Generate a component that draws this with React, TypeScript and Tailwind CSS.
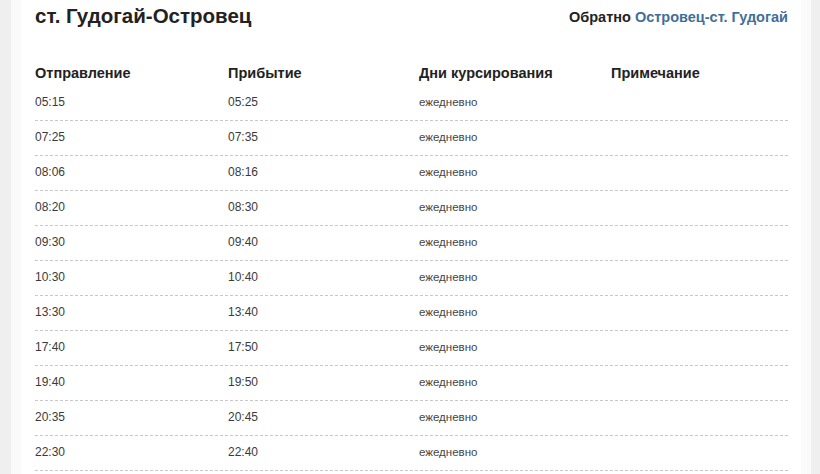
import React from 'react';

const rows = [
  ['05:15', '05:25'],
  ['07:25', '07:35'],
  ['08:06', '08:16'],
  ['08:20', '08:30'],
  ['09:30', '09:40'],
  ['10:30', '10:40'],
  ['13:30', '13:40'],
  ['17:40', '17:50'],
  ['19:40', '19:50'],
  ['20:35', '20:45'],
  ['22:30', '22:40'],
];

export default function App() {
  return (
    <div className="h-[474px] overflow-hidden bg-[#efefef] pl-[11px] pr-[9px] font-['Liberation_Sans',Arial,sans-serif] text-[#3a3a3a]">
      <div className="h-full border-x-[10px] border-[#fafafa] bg-white pl-[14px] pr-[13px]">
        <div className="flex items-start justify-between pt-[4px]">
          <h1 className="text-[20.5px] font-bold leading-[24px] text-[#222]">ст. Гудогай-Островец</h1>
          <div className="pt-[4px] text-[14.5px] font-bold leading-[18px] text-[#222]">
            Обратно <a className="text-[#3f6f98]">Островец-ст. Гудогай</a>
          </div>
        </div>

        <div className="mt-[35px] grid grid-cols-[193px_191px_192px_1fr] pb-[3px] text-[14.5px] font-bold leading-[20px] text-[#222]">
          <div>Отправление</div>
          <div>Прибытие</div>
          <div>Дни курсирования</div>
          <div>Примечание</div>
        </div>

        {rows.map(([dep, arr]) => (
          <div
            key={dep}
            className="grid grid-cols-[193px_191px_192px_1fr] items-center border-b border-dashed border-[#c8c8c8] pt-[7px] pb-[9px] leading-[18px]"
          >
            <div className="text-[12px]">{dep}</div>
            <div className="text-[12px]">{arr}</div>
            <div className="text-[11.5px] text-[#444]">ежедневно</div>
            <div></div>
          </div>
        ))}
      </div>
    </div>
  );
}
